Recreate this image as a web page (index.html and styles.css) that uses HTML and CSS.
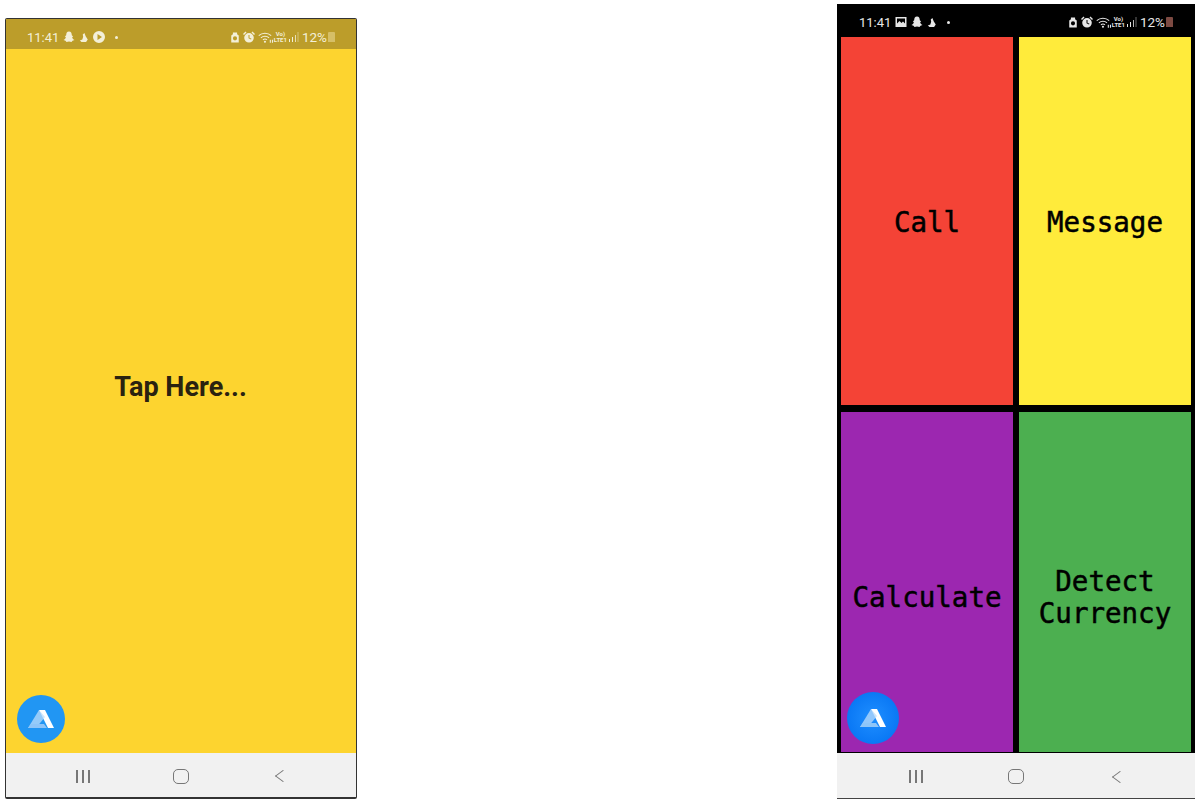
FILE: index.html
```html
<!DOCTYPE html>
<html lang="en">
<head>
    <meta charset="UTF-8">
    <meta name="viewport" content="width=device-width, initial-scale=1.0">
    <title>Phone Screens</title>
    <link rel="stylesheet" href="styles.css">
</head>
<body>
    <svg class="defs" width="0" height="0">
        <symbol id="snap" viewBox="0 0 12 12"><path d="M6 .5C4 .5 3.200 2 3.200 4.200L1.800 5.400l1 .6C2.800 7.400 1.800 8.400.5 9l2 .8 1 1.200L6 10.400l2.500.6 1-1.200 2-.8C10.200 8.400 9.200 7.400 9.200 6l1-.6-1.400-1.200C8.800 2 8 .5 6 .5z"/></symbol>
        <symbol id="drive" viewBox="0 0 12 12"><path d="M6.500 .5 8 4.500l2.500 4L8.500 11.500H3L1 9.500 4 8.500 5 5 4.500 2.500z"/></symbol>
        <symbol id="play" viewBox="0 0 12 12"><path fill-rule="evenodd" d="M6 0a6 6 0 1 0 0 12A6 6 0 0 0 6 0zM4.500 3l4.500 3-4.500 3z"/></symbol>
        <symbol id="picture" viewBox="0 0 12 12"><path fill-rule="evenodd" d="M.5 1h11v10H.5zM2 2.500v5l2.500-2.500 2 2L8 5.500l2 2v-5z"/></symbol>
        <symbol id="lock" viewBox="0 0 12 12"><path fill-rule="evenodd" d="M3.500 0h5v2L10.500 3.500V12h-9V3.500L3.500 2zM6 4.500A2.500 2.500 0 1 0 6 9.500 2.500 2.500 0 0 0 6 4.500z"/></symbol>
        <symbol id="alarm" viewBox="0 0 12 12"><path fill-rule="evenodd" d="M6 2a4.800 4.800 0 1 0 0 9.600A4.800 4.800 0 0 0 6 2zM5.500 4h1v2.800l2 1-.5.800-2.500-1.300zM0 3l2.500-2.500L3.500 1.500 1 4zM8.500 1.500 9.500.5 12 3l-1 1z"/></symbol>
        <symbol id="wifi" viewBox="0 0 14 12"><g fill="none" stroke="currentColor" stroke-width="1"><path d="M.7 4.300a8.500 8.500 0 0 1 11.600 0"/><path d="M2.700 6.300a5.600 5.600 0 0 1 7.600 0"/><path d="M4.600 8.200a2.900 2.900 0 0 1 3.800 0"/></g><circle cx="6.500" cy="10" r="1"/><path d="M11 8h1v3h-1zM13 8h1v3h-1z"/></symbol>
        <symbol id="bars" viewBox="0 0 10 10"><path d="M0 7h1v3H0zM3 5h1v5H3zM6 3h.8v7H6z"/><path opacity=".45" d="M8.500 0h1v10h-1z"/></symbol>
        <symbol id="logo" viewBox="0 0 28 20"><path fill="#fff" d="M12 1h6l9 18h-6z"/><path fill="#bcdcfb" d="M12 1 1 19h8l9-11z" opacity=".75"/><path fill="#8ec5f8" d="M4 15h13l3 4H1z"/></symbol>
    </svg>

    <main class="screens">
        <section class="phone phone-tap">
            <div class="status status-dim">
                <span class="status-left">
                    <span class="clock">11:41</span>
                    <svg class="ic"><use href="#snap"/></svg>
                    <svg class="ic ic-sm"><use href="#drive"/></svg>
                    <svg class="ic"><use href="#play"/></svg>
                    <span class="dot"></span>
                </span>
                <span class="status-right">
                    <svg class="ic ic-sm"><use href="#lock"/></svg>
                    <svg class="ic"><use href="#alarm"/></svg>
                    <svg class="ic ic-wifi"><use href="#wifi"/></svg>
                    <span class="lte">Vo)<br>LTE1</span>
                    <svg class="ic ic-bars"><use href="#bars"/></svg>
                    <span class="pct">12%</span>
                    <span class="battery"></span>
                </span>
            </div>
            <div class="tap-area">
                <span class="tap-text">Tap Here...</span>
                <span class="fab fab-flat"><svg class="fab-logo"><use href="#logo"/></svg></span>
            </div>
            <nav class="navbar">
                <span class="nav-recent"><i></i><i></i><i></i></span>
                <span class="nav-home"></span>
                <span class="nav-back"></span>
            </nav>
        </section>

        <section class="phone phone-menu">
            <div class="status status-black">
                <span class="status-left">
                    <span class="clock">11:41</span>
                    <svg class="ic"><use href="#picture"/></svg>
                    <svg class="ic"><use href="#snap"/></svg>
                    <svg class="ic ic-sm"><use href="#drive"/></svg>
                    <span class="dot"></span>
                </span>
                <span class="status-right">
                    <svg class="ic ic-sm"><use href="#lock"/></svg>
                    <svg class="ic"><use href="#alarm"/></svg>
                    <svg class="ic ic-wifi"><use href="#wifi"/></svg>
                    <span class="lte">Vo)<br>LTE1</span>
                    <svg class="ic ic-bars"><use href="#bars"/></svg>
                    <span class="pct">12%</span>
                    <span class="battery battery-low"></span>
                </span>
            </div>
            <div class="tiles">
                <div class="tile tile-red">Call</div>
                <div class="tile tile-yellow">Message</div>
                <div class="tile tile-purple tile-low">Calculate</div>
                <div class="tile tile-green tile-low">Detect<br>Currency</div>
                <span class="fab fab-glow"><svg class="fab-logo"><use href="#logo"/></svg></span>
            </div>
            <nav class="navbar">
                <span class="nav-recent"><i></i><i></i><i></i></span>
                <span class="nav-home"></span>
                <span class="nav-back"></span>
            </nav>
        </section>
    </main>
</body>
</html>
```

FILE: styles.css
```css
body {
    font-family: Roboto, "Liberation Sans", sans-serif;
    margin: 0;
    padding: 0;
    background-color: #fff;
}
.defs {
    display: block;
    height: 0;
}
.screens {
    display: flex;
    justify-content: space-between;
    align-items: flex-start;
    height: 806px;
    box-sizing: border-box;
    padding: 4px 4px 0 5px;
    overflow: hidden;
}
.phone {
    display: flex;
    flex-direction: column;
    box-sizing: border-box;
}
.phone-tap {
    width: 352px;
    height: 781px;
    margin-top: 14px;
    border: 1px solid #333;
    border-bottom-width: 2px;
    border-radius: 2px;
}
.phone-menu {
    width: 358px;
    height: 795px;
    background-color: #000;
    border-radius: 2px 2px 0 0;
}

/* status bar */
.status {
    display: flex;
    justify-content: space-between;
    align-items: center;
    box-sizing: border-box;
    flex: none;
    font-size: 13px;
}
.status-dim {
    height: 30px;
    padding: 6px 21px 0 21px;
    background-color: #bc9d2a;
    color: #f3efd8;
}
.status-black {
    height: 33px;
    padding: 3px 22px 0 22px;
    background-color: #000;
    color: #e6e6e6;
}
.status-left,
.status-right {
    display: flex;
    align-items: center;
    gap: 4px;
}
.status-right {
    gap: 3px;
}
.clock {
    font-size: 13px;
}
.ic {
    width: 12px;
    height: 12px;
    fill: currentColor;
}
.ic-sm {
    width: 10px;
    height: 11px;
}
.ic-wifi {
    width: 15px;
    height: 13px;
}
.ic-bars {
    width: 10px;
    height: 10px;
    margin-left: -1px;
}
.lte {
    font-size: 6px;
    line-height: 6px;
    font-weight: 700;
    text-align: center;
    margin-left: -2px;
}
.dot {
    width: 3px;
    height: 3px;
    margin-left: 6px;
    border-radius: 50%;
    background-color: currentColor;
}
.pct {
    font-size: 13.5px;
}
.battery {
    width: 7px;
    height: 10px;
    margin-left: -2px;
    background-color: #d6bf67;
    border-radius: 1px 1px 0 0;
}
.battery-low {
    background-color: #7d4a42;
}

/* first screen */
.tap-area {
    position: relative;
    flex: 1;
    display: flex;
    justify-content: center;
    align-items: center;
    padding: 0 1px 29px 0;
    background-color: #fdd42f;
}
.tap-text {
    font-size: 27px;
    font-weight: 700;
    color: #2a2210;
}

/* second screen */
.tiles {
    position: relative;
    flex: 1;
    display: grid;
    grid-template-columns: 172px 172px;
    grid-template-rows: 368px 340px;
    justify-content: center;
    gap: 7px 6px;
    padding: 0 4px;
}
.tile {
    display: flex;
    justify-content: center;
    align-items: center;
    text-align: center;
    padding-top: 2px;
    font-family: "DejaVu Sans Mono", "Liberation Mono", monospace;
    font-size: 27.5px;
    line-height: 32px;
    color: #000;
    -webkit-text-stroke: 0.5px #000;
}
.tile-low {
    padding-top: 30px;
}
.tile-red {
    background-color: #f44336;
}
.tile-yellow {
    background-color: #ffeb3b;
}
.tile-purple {
    background-color: #9c27b0;
}
.tile-green {
    background-color: #4caf50;
}

/* floating button */
.fab {
    position: absolute;
    display: flex;
    justify-content: center;
    align-items: center;
    border-radius: 50%;
}
.fab-flat {
    left: 11px;
    bottom: 10px;
    width: 48px;
    height: 48px;
    background-color: #2196f3;
}
.fab-glow {
    left: 10px;
    bottom: 9px;
    width: 52px;
    height: 52px;
    background: radial-gradient(circle, #1f8fff 0%, #0a78f5 70%, #0f6fe8 100%);
}
.fab-logo {
    width: 28px;
    height: 20px;
}

/* navigation bar */
.navbar {
    flex: none;
    display: flex;
    justify-content: space-between;
    align-items: center;
    height: 44px;
    padding: 2px 68px 0 70px;
    box-sizing: border-box;
    background-color: #f1f1f1;
}
.phone-menu .navbar {
    height: 46px;
    border-bottom: 1px solid #444;
    padding: 2px 70px 0 72px;
}
.nav-recent {
    display: flex;
    gap: 4px;
}
.nav-recent i {
    width: 2px;
    height: 13px;
    background-color: #777;
}
.nav-home {
    width: 14px;
    height: 13px;
    margin-right: 7px;
    border: 1.5px solid #777;
    border-radius: 5px;
}
.nav-back {
    width: 9px;
    height: 9px;
    border-left: 1.5px solid #777;
    border-bottom: 1.5px solid #777;
    transform: rotate(45deg) skew(-8deg, -8deg);
}
```
